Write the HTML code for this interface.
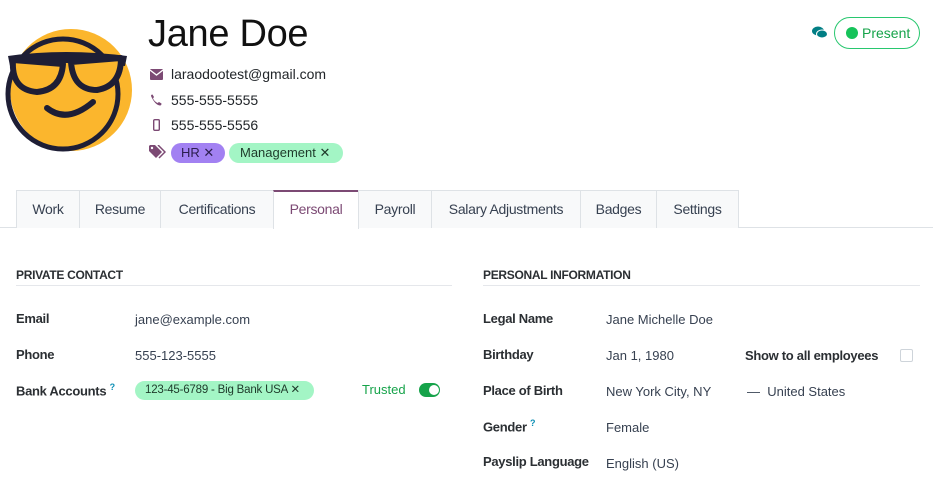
<!DOCTYPE html>
<html><head><meta charset="utf-8"><style>
*{margin:0;padding:0;box-sizing:border-box}
body{width:933px;height:486px;background:#fff;font-family:"Liberation Sans",sans-serif;color:#212529;font-size:13px;position:relative;overflow:hidden}
.a{position:absolute;white-space:nowrap}
.lbl{font-weight:bold;color:#2b2f33;font-size:13px;letter-spacing:-0.3px}
.val{color:#374151;font-size:13px}
.tab{position:absolute;top:190px;height:38px;border:1px solid #dee2e6;border-bottom:none;background:#f8f9fa;font-size:14px;color:#374151;text-align:center;line-height:37px;letter-spacing:-0.3px}
</style></head><body>
<svg class="a" style="left:5px;top:28px" width="130" height="126" viewBox="0 0 130 126">
<circle cx="66" cy="62" r="61" fill="#fbb62d"/>
<circle cx="58" cy="66" r="55" fill="none" stroke="#1e1e35" stroke-width="5"/>
<path d="M3 28 Q60 20 122 28 L120 38 Q60 32 5 38 Z" fill="#1e1e35"/>
<path d="M8 32 Q6 62 32 64 Q56 62 58 36 Z" fill="#fbb62d" stroke="#1e1e35" stroke-width="6" stroke-linejoin="round"/>
<path d="M66 34 Q68 62 92 62 Q116 58 116 30 Z" fill="#fbb62d" stroke="#1e1e35" stroke-width="6" stroke-linejoin="round"/>
<path d="M42 80 Q62 96 88 74" fill="none" stroke="#1e1e35" stroke-width="6" stroke-linecap="round"/>
</svg>
<div class="a" style="left:148px;top:13px;font-size:38px;color:#111;letter-spacing:-0.3px">Jane Doe</div>
<svg class="a" style="left:150px;top:69px" width="13" height="11"><rect width="13" height="11" rx="1" fill="#7c4a74"/><path d="M0 1 L6.5 6 L13 1" stroke="#fff" fill="none" stroke-width="1.3"/></svg>
<div class="a" style="left:171px;top:66px;font-size:14px">laraodootest@gmail.com</div>
<svg class="a" style="left:150px;top:94px" width="12" height="12" viewBox="0 0 12 12"><path d="M1 2 Q1 0.5 2.5 0.5 L4 3 L3 4.5 Q4.5 7.5 7.5 9 L9 8 L11.5 9.5 Q11.5 11.5 10 11.5 Q5 11 1 2Z" fill="#7c4a74"/></svg>
<div class="a" style="left:171px;top:92px;font-size:14px">555-555-5555</div>
<svg class="a" style="left:153px;top:119px" width="7" height="12"><rect x="0.7" y="0.7" width="5.6" height="10.6" rx="1" fill="none" stroke="#7c4a74" stroke-width="1.4"/></svg>
<div class="a" style="left:171px;top:117px;font-size:14px">555-555-5556</div>
<svg class="a" style="left:149px;top:145px" width="17" height="14"><path d="M0 1 L0 6 L7 13 L13 7 L6 0 L1 0Z" fill="#7c4a74"/><path d="M9 0 L16 7 L10 13" fill="none" stroke="#7c4a74" stroke-width="1.5"/><circle cx="3" cy="3" r="1.2" fill="#fff"/></svg>
<div class="a" style="left:171px;top:143px;width:54px;height:20px;border-radius:10px;background:#a281f2;font-size:13px;line-height:20px;padding-left:10px;color:#2b1d4d">HR &#10005;</div>
<div class="a" style="left:229px;top:143px;width:114px;height:20px;border-radius:10px;background:#a3f5c5;font-size:13px;line-height:20px;padding-left:11px;color:#1e3a2a">Management &#10005;</div>
<svg class="a" style="left:812px;top:26px" width="16" height="13"><ellipse cx="6" cy="5" rx="6" ry="4.5" fill="#017e84"/><ellipse cx="10" cy="8" rx="5.5" ry="4" fill="#017e84" stroke="#fff" stroke-width="1"/></svg>
<div class="a" style="left:834px;top:17px;width:86px;height:32px;border:1px solid #28c76f;border-radius:16px;font-size:14px;color:#16a34a;line-height:30px;padding-left:27px">Present</div>
<div class="a" style="left:846px;top:27px;width:12px;height:12px;border-radius:6px;background:#16c35a"></div>

<div class="a" style="left:0;top:227px;width:933px;height:1px;background:#dee2e6"></div>
<div class="tab" style="left:16px;width:64px">Work</div>
<div class="tab" style="left:79px;width:82px">Resume</div>
<div class="tab" style="left:160px;width:114px">Certifications</div>
<div class="tab" style="left:273px;width:86px;background:#fff;border-top:2px solid #7c4a74;color:#7c4a74;height:39px;line-height:35px">Personal</div>
<div class="tab" style="left:358px;width:74px">Payroll</div>
<div class="tab" style="left:431px;width:150px">Salary Adjustments</div>
<div class="tab" style="left:580px;width:77px">Badges</div>
<div class="tab" style="left:656px;width:83px">Settings</div>

<div class="a lbl" style="left:16px;top:268px;font-size:12px">PRIVATE CONTACT</div>
<div class="a" style="left:16px;top:285px;width:436px;height:1px;background:#e5e7eb"></div>
<div class="a lbl" style="left:483px;top:268px;font-size:12px">PERSONAL INFORMATION</div>
<div class="a" style="left:483px;top:285px;width:437px;height:1px;background:#e5e7eb"></div>

<div class="a lbl" style="left:16px;top:311px">Email</div>
<div class="a val" style="left:135px;top:312px">jane@example.com</div>
<div class="a lbl" style="left:16px;top:347px">Phone</div>
<div class="a val" style="left:135px;top:348px">555-123-5555</div>
<div class="a lbl" style="left:16px;top:382px">Bank Accounts <sup style="color:#0d8fb5;font-size:9px">?</sup></div>
<div class="a" style="left:135px;top:381px;width:179px;height:19px;border-radius:10px;background:#a3f5c5;font-size:11.5px;line-height:19px;padding-left:10px;color:#1e3a2a;letter-spacing:-0.2px">123-45-6789 - Big Bank USA &#10005;</div>
<div class="a" style="left:362px;top:382px;font-size:13px;color:#16a34a">Trusted</div>
<div class="a" style="left:419px;top:383px;width:21px;height:14px;border-radius:7px;background:#16a34a"></div>
<div class="a" style="left:429px;top:385px;width:10px;height:10px;border-radius:5px;background:#fff"></div>

<div class="a lbl" style="left:483px;top:311px">Legal Name</div>
<div class="a val" style="left:606px;top:312px">Jane Michelle Doe</div>
<div class="a lbl" style="left:483px;top:347px">Birthday</div>
<div class="a val" style="left:606px;top:348px">Jan 1, 1980</div>
<div class="a lbl" style="left:745px;top:348px">Show to all employees</div>
<div class="a" style="left:900px;top:349px;width:13px;height:13px;border:1px solid #ced4da;border-radius:2px"></div>
<div class="a lbl" style="left:483px;top:383px">Place of Birth</div>
<div class="a val" style="left:606px;top:384px">New York City, NY</div>
<div class="a val" style="left:747px;top:384px">&mdash;&nbsp; United States</div>
<div class="a lbl" style="left:483px;top:418px">Gender <sup style="color:#0d8fb5;font-size:9px">?</sup></div>
<div class="a val" style="left:606px;top:420px">Female</div>
<div class="a lbl" style="left:483px;top:454px">Payslip Language</div>
<div class="a val" style="left:606px;top:456px">English (US)</div>
</body></html>
